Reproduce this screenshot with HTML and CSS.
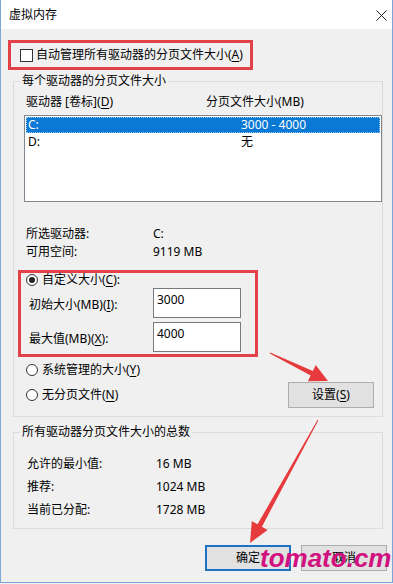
FILE: index.html
```html
<!DOCTYPE html>
<html lang="zh-CN">
<head>
    <meta charset="UTF-8">
    <meta name="viewport" content="width=device-width, initial-scale=1.0">
    <title>虚拟内存</title>
    <link rel="stylesheet" href="styles.css">
</head>
<body>
<div class="window">
    <div class="titlebar">
        <span class="title">虚拟内存</span>
        <svg class="close" width="11" height="11" viewBox="0 0 11 11">
            <path d="M0.5 0.5L10.5 10.5M10.5 0.5L0.5 10.5" stroke="#1a1a1a" stroke-width="1" fill="none"/>
        </svg>
    </div>

    <div class="content">
        <div class="mark auto-box">
            <span class="checkbox"></span>
            <span>自动管理所有驱动器的分页文件大小(<u>A</u>)</span>
        </div>

        <div class="group drives">
            <div class="group-title">每个驱动器的分页文件大小</div>
            <div class="list-head">
                <span class="head-drive">驱动器 [卷标](<u>D</u>)</span>
                <span>分页文件大小(MB)</span>
            </div>
            <div class="drive-list">
                <div class="drive-row selected"><span class="col-drive">C:</span><span>3000 - 4000</span></div>
                <div class="drive-row"><span class="col-drive">D:</span><span>无</span></div>
            </div>

            <div class="info">
                <div class="info-row"><span class="info-label">所选驱动器:</span><span>C:</span></div>
                <div class="info-row"><span class="info-label">可用空间:</span><span>9119 MB</span></div>
            </div>

            <div class="mark custom-box">
                <div class="radio-row first"><span class="radio checked"></span>自定义大小(<u>C</u>):</div>
                <div class="size-row">
                    <span class="size-label">初始大小(MB)(<u>I</u>):</span>
                    <span class="field">3000</span>
                </div>
                <div class="size-row second">
                    <span class="size-label">最大值(MB)(<u>X</u>):</span>
                    <span class="field">4000</span>
                </div>
            </div>

            <div class="options">
                <div class="radio-col">
                    <div class="radio-row"><span class="radio"></span>系统管理的大小(<u>Y</u>)</div>
                    <div class="radio-row"><span class="radio"></span>无分页文件(<u>N</u>)</div>
                </div>
                <button class="btn set-btn">设置(<u>S</u>)</button>
            </div>
        </div>

        <div class="group totals">
            <div class="group-title">所有驱动器分页文件大小的总数</div>
            <div class="total-rows">
                <div class="total-row"><span class="total-label">允许的最小值:</span><span>16 MB</span></div>
                <div class="total-row"><span class="total-label">推荐:</span><span>1024 MB</span></div>
                <div class="total-row"><span class="total-label">当前已分配:</span><span>1728 MB</span></div>
            </div>
        </div>

        <div class="actions">
            <button class="btn default">确定</button>
            <button class="btn">取消</button>
        </div>
    </div>

    <!-- annotation arrows drawn over the dialog -->
    <svg class="arrows" width="393" height="584" viewBox="0 0 393 584">
        <polygon fill="#e63a3c" points="270.2,352.6 312.9,371 315.7,365.1 328,381 307.9,381.3 310.7,375.5 269.8,353.5"/>
        <polygon fill="#e63a3c" points="318.4,420.2 261.9,526.7 267.6,529.9 250,543 251.8,521.1 257.5,524.3 317.6,419.8"/>
    </svg>
    <div class="watermark">tomato.cm</div>
</div>
</body>
</html>
```

FILE: styles.css
```css
body {
    margin: 0;
    font-family: "Noto Sans", "Noto Sans CJK SC", sans-serif;
    font-size: 12px;
    color: #000;
    background-color: #f0f0f0;
}
u {
    text-decoration-thickness: 1px;
    text-underline-offset: 2px;
}
.window {
    position: relative;
    width: 393px;
    height: 583px;
    box-sizing: border-box;
    border: 1px solid #7ca6d6;
    border-top: 0;
    background-color: #f0f0f0;
    overflow: hidden;
}
.titlebar {
    height: 29px;
    background-color: #fff;
    display: flex;
    align-items: center;
    justify-content: space-between;
    padding: 0 5px 0 8px;
}
.title {
    line-height: 16px;
    padding-top: 1px;
}
.close {
    display: block;
    margin-top: 1px;
}

/* red highlight boxes */
.mark {
    border: 3px solid #e3414a;
    box-sizing: border-box;
}
.auto-box {
    margin: 11px 0 0 7px;
    width: 245px;
    height: 30px;
    display: flex;
    align-items: center;
    padding-left: 9px;
    line-height: 16px;
}
.checkbox {
    width: 13px;
    height: 13px;
    box-sizing: border-box;
    border: 1px solid #333;
    background-color: #fff;
    margin-right: 3px;
}

/* group boxes */
.group {
    margin-left: 12px;
    width: 370px;
    box-sizing: border-box;
    border: 1px solid #dcdcdc;
}
.group-title {
    display: table;
    height: 16px;
    line-height: 16px;
    margin: -9px 0 0 6px;
    padding: 0 2px;
    background-color: #f0f0f0;
}
.drives {
    margin-top: 11px;
    padding-bottom: 8px;
}
.list-head {
    display: flex;
    height: 16px;
    line-height: 16px;
    margin-top: 5px;
    padding-left: 12px;
}
.head-drive {
    width: 180px;
}
.drive-list {
    margin: 5px 0 0 10px;
    width: 358px;
    height: 87px;
    box-sizing: border-box;
    border: 1px solid #828790;
    background-color: #fff;
    padding: 1px;
}
.drive-row {
    display: flex;
    height: 16px;
    line-height: 16px;
    padding-left: 2px;
    margin-bottom: 1px;
}
.drive-row.selected {
    background-color: #0a78d5;
    color: #fff;
    outline: 1px dotted #9cc6ee;
    outline-offset: -1px;
}
.col-drive {
    width: 213px;
}
.info {
    margin-top: 23px;
    padding-left: 12px;
}
.info-row {
    display: flex;
    height: 18px;
    line-height: 18px;
}
.info-label {
    width: 127px;
}

.custom-box {
    margin: 9px 0 0 4px;
    width: 240px;
    height: 87px;
}
.radio-row {
    display: flex;
    align-items: center;
    height: 16px;
    line-height: 16px;
}
.radio-row.first {
    height: 14px;
    margin-left: 5px;
}
.radio {
    width: 12px;
    height: 12px;
    box-sizing: border-box;
    border: 1px solid #333;
    border-radius: 50%;
    background-color: #fff;
    margin-right: 4px;
    display: flex;
    align-items: center;
    justify-content: center;
}
.radio.checked::after {
    content: "";
    width: 6px;
    height: 6px;
    border-radius: 50%;
    background-color: #222;
}
.size-row {
    display: flex;
    margin-top: 1px;
    padding-left: 8px;
}
.size-row.second {
    margin-top: 4px;
}
.size-label {
    width: 124px;
    line-height: 16px;
    padding-top: 9px;
}
.field {
    width: 88px;
    height: 30px;
    box-sizing: border-box;
    border: 1px solid #7a7a7a;
    background-color: #fff;
    padding: 3px 3px;
    line-height: 16px;
}

.options {
    display: flex;
    justify-content: space-between;
    align-items: flex-end;
    margin-top: 5px;
    padding: 0 8px 0 12px;
    height: 46px;
}
.radio-col {
    align-self: flex-start;
}
.radio-col .radio-row + .radio-row {
    margin-top: 9px;
}

.btn {
    font: inherit;
    color: #000;
    width: 86px;
    height: 26px;
    box-sizing: border-box;
    border: 1px solid #adadad;
    background-color: #e1e1e1;
    padding: 0;
    line-height: 16px;
}
.btn.default {
    border: 2px solid #1b72c4;
}

.totals {
    margin-top: 15px;
    padding-bottom: 7px;
}
.total-rows {
    margin-top: 12px;
    padding-left: 13px;
}
.total-row {
    display: flex;
    height: 23px;
    line-height: 23px;
}
.total-label {
    width: 129px;
}

.actions {
    display: flex;
    justify-content: flex-end;
    gap: 10px;
    margin-top: 16px;
    padding-right: 5px;
}

.arrows {
    position: absolute;
    left: -1px;
    top: 0;
    pointer-events: none;
}
.watermark {
    position: absolute;
    left: 259px;
    top: 545px;
    font-family: "Liberation Sans", sans-serif;
    font-weight: bold;
    font-style: italic;
    font-size: 26px;
    line-height: 1;
    color: #d1117f;
    pointer-events: none;
}
```
